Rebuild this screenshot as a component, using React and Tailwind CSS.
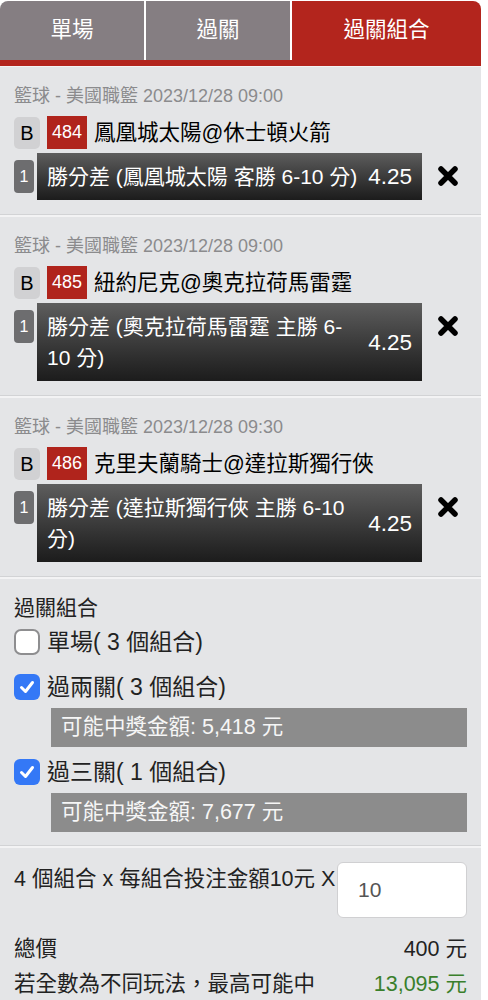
import React from 'react';

const FONT = { fontFamily: '"Liberation Sans", "Noto Sans CJK TC", sans-serif' };

const bets = [
  {
    time: '2023/12/28 09:00',
    no: '484',
    teams: '鳳凰城太陽@休士頓火箭',
    pick: ['勝分差 (鳳凰城太陽 客勝 6-10 分)'],
  },
  {
    time: '2023/12/28 09:00',
    no: '485',
    teams: '紐約尼克@奧克拉荷馬雷霆',
    pick: ['勝分差 (奧克拉荷馬雷霆 主勝 6-', '10 分)'],
  },
  {
    time: '2023/12/28 09:30',
    no: '486',
    teams: '克里夫蘭騎士@達拉斯獨行俠',
    pick: ['勝分差 (達拉斯獨行俠 主勝 6-10', '分)'],
  },
];

function CloseIcon() {
  return (
    <svg width="24" height="24" viewBox="0 0 24 24" className="shrink-0">
      <path d="M5 5L19 19M19 5L5 19" stroke="#000" strokeWidth="5.5" strokeLinecap="round" />
    </svg>
  );
}

function Checkbox({ checked }) {
  if (checked) {
    return (
      <div className="w-[26px] h-[26px] rounded-[6px] bg-[#3478f6] flex items-center justify-center shrink-0">
        <svg width="18" height="18" viewBox="0 0 18 18">
          <path d="M3.5 9.5L7.5 13.5L14.5 4.5" stroke="#fff" strokeWidth="3" fill="none" strokeLinecap="round" strokeLinejoin="round" />
        </svg>
      </div>
    );
  }
  return <div className="w-[26px] h-[26px] rounded-[7px] bg-white border-2 border-[#8e8e90] shrink-0"></div>;
}

function BetCard({ bet }) {
  return (
    <div className="bg-[#e4e5e7] border-b border-[#d2d3d5] px-[14px] pt-[15px] pb-[14px]">
      {/* header */}
      <div className="text-[18px] leading-[28px] text-[#8b8b8d]">籃球 - 美國職籃 {bet.time}</div>

      <div className="flex items-center mt-[6px]">
        <div className="w-[26px] h-[32px] rounded-[5px] bg-[#d1d1d3] flex items-center justify-center text-[20px] text-black">B</div>
        <div className="ml-[7px] w-[40px] h-[33px] bg-[#b0241c] flex items-center justify-center text-[18px] text-white">{bet.no}</div>
        <div className="ml-[7px] text-[21.5px] leading-[32px] text-black">{bet.teams}</div>
      </div>

      <div className="flex items-start mt-[4px]">
        <div className="mt-[7px] w-[20px] h-[33px] rounded-[4px] bg-[#6d6d6f] flex items-center justify-center text-[16px] text-white">1</div>
        <div className="ml-[3px] w-[385px] flex items-center px-[10px] py-[8px] bg-gradient-to-b from-[#5e5e5e] to-[#1c1c1c] text-white">
          <div className="flex-1 text-[21px] leading-[31px]">
            {bet.pick.map((l, i) => (
              <div key={i}>{l}</div>
            ))}
          </div>
          <div className="ml-[2px] text-[22.5px] leading-[31px]">4.25</div>
        </div>
        <div className="ml-[14px] mt-[11px]">
          <CloseIcon />
        </div>
      </div>
    </div>
  );
}

function Option({ checked, label, prize }) {
  return (
    <div>
      <div className="flex items-center">
        <Checkbox checked={checked} />
        <div className="ml-[7px] text-[23px] leading-[26px] text-[#222]">{label}</div>
      </div>
      {prize && (
        <div className="ml-[37px] mt-[8px] h-[39px] bg-[#8c8c8c] flex items-center pl-[10px] text-[21.5px] text-[#f6f6f6]">
          可能中獎金額: {prize} 元
        </div>
      )}
    </div>
  );
}

export default function App() {
  return (
    <div className="w-[488px] bg-white" style={FONT}>
      <div className="w-[481px] bg-[#f3f3f4]">
        {/* Tabs */}
        <div className="flex h-[60px] pt-[1px] gap-[2px] bg-white">
          <div className="w-[144px] rounded-tl-[8px] bg-[#857e82] flex items-center justify-center text-[21.5px] text-white">單場</div>
          <div className="w-[144px] bg-[#857e82] flex items-center justify-center text-[21.5px] text-white">過關</div>
          <div className="flex-1 rounded-tr-[8px] bg-[#b3251d] flex items-center justify-center text-[21.5px] text-white">過關組合</div>
        </div>
        <div className="h-[6px] bg-[#b3251d]"></div>

        <div className="flex flex-col gap-[2px] pt-[1px]">
          {bets.map((b) => (
            <BetCard key={b.no} bet={b} />
          ))}

          {/* Combination */}
          <div className="bg-[#e4e5e7] border-b border-[#d2d3d5] px-[14px] pt-[15px] pb-[13px]">
            <div className="text-[21px] leading-[28px] text-[#222]">過關組合</div>
            <div className="mt-[7px]">
              <Option checked={false} label="單場( 3 個組合)" />
            </div>
            <div className="mt-[19px]">
              <Option checked label="過兩關( 3 個組合)" prize="5,418" />
            </div>
            <div className="mt-[12px]">
              <Option checked label="過三關( 1 個組合)" prize="7,677" />
            </div>
          </div>

          {/* Summary */}
          <div className="bg-[#e4e5e7] px-[14px] pt-[14px] pb-[10px]">
            <div className="flex items-start justify-between">
              <div className="mt-[4px] text-[21.5px] leading-[26px] text-[#222]">4 個組合 x 每組合投注金額10元 X</div>
              <div className="w-[130px] h-[56px] bg-white rounded-[6px] border border-[#d0d0d2] flex items-center pl-[20px] text-[21px] text-[#555]">10</div>
            </div>
            <div className="mt-[16px] flex justify-between text-[21.5px] leading-[30px] text-[#222]">
              <span>總價</span>
              <span>400 元</span>
            </div>
            <div className="mt-[5px] flex justify-between text-[21.5px] leading-[30px] text-[#222]">
              <span>若全數為不同玩法，最高可能中</span>
              <span className="text-[#3a7f2b]">13,095 元</span>
            </div>
          </div>
        </div>
      </div>
    </div>
  );
}
